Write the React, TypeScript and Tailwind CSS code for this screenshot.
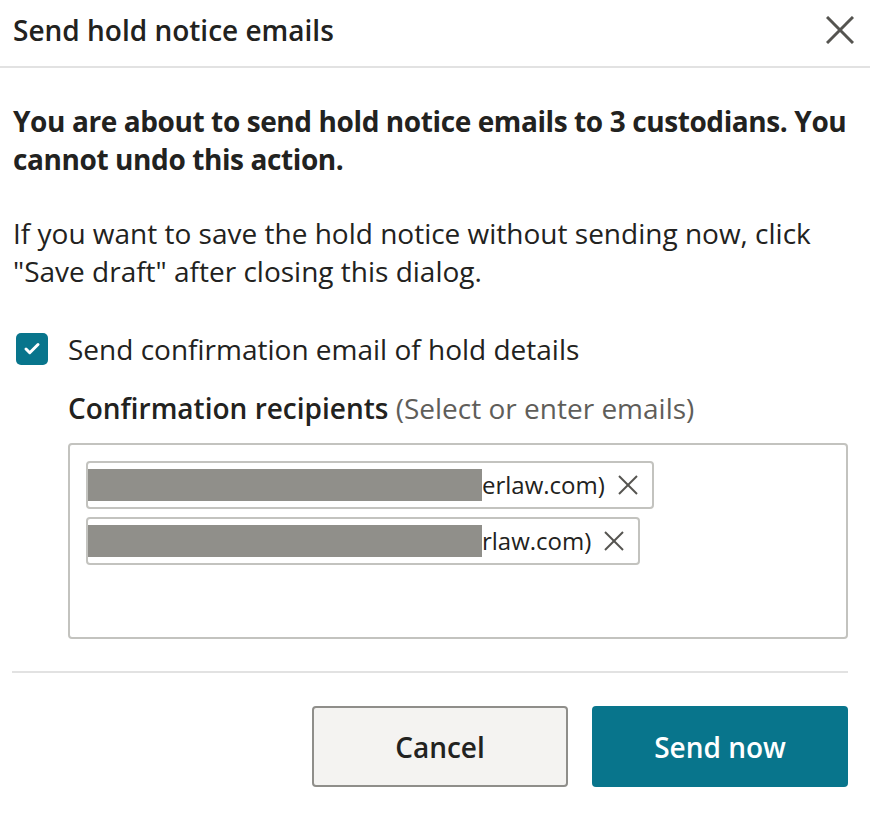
import { Check } from 'lucide-react';

const recipients = [
  { hidden: 394, tail: 'erlaw.com)' },
  { hidden: 394, tail: 'rlaw.com)' },
];

function Cross({ size, stroke, className }: { size: number; stroke: number; className?: string }) {
  return (
    <svg width={size} height={size} viewBox={`0 0 ${size} ${size}`} className={className} fill="none" stroke="currentColor" strokeWidth={stroke}>
      <line x1="1" y1="1" x2={size - 1} y2={size - 1} />
      <line x1={size - 1} y1="1" x2="1" y2={size - 1} />
    </svg>
  );
}

export default function App() {
  return (
    <div className="w-[870px] h-[816px] bg-white text-[#222220] font-['Open_Sans',sans-serif] overflow-hidden">
      <div className="h-[68px] flex items-center justify-between pl-[13px] pr-[16px] border-b-2 border-[#e2e2e2]">
        <h2 className="text-[28px] font-semibold leading-none -mt-[6px]">Send hold notice emails</h2>
        <button className="text-[#555450] -mt-[6px]">
          <Cross size={28} stroke={3} />
        </button>
      </div>

      <div className="pl-[13px] pr-[16px] pt-[34px]">
        <p className="text-[28px] font-bold leading-[38px] tracking-[-0.4px] pr-[4px]">
          You are about to send hold notice emails to 3 custodians. You cannot undo this action.
        </p>
        <p className="text-[28px] leading-[38px] mt-[36px]">
          If you want to save the hold notice without sending now, click "Save draft" after closing this dialog.
        </p>

        <label className="flex items-center gap-[20px] mt-[43px] pl-[3px]">
          <span className="w-[32px] h-[32px] rounded-[5px] bg-[#08758c] flex items-center justify-center text-white">
            <Check size={18} strokeWidth={4} />
          </span>
          <span className="text-[28px] leading-[32px]">Send confirmation email of hold details</span>
        </label>

        <div className="pl-[55px] mt-[26px]">
          <div className="text-[28px] leading-[34px]">
            <span className="font-semibold">Confirmation recipients</span>{' '}
            <span className="text-[#5f5e5a]">(Select or enter emails)</span>
          </div>
          <div className="mt-[18px] h-[196px] w-[780px] border-2 border-[#c3c3bf] rounded-[4px] px-[16px] pt-[16px] flex flex-col items-start gap-[8px]">
            {recipients.map((r, i) => (
              <div key={i} className="h-[48px] border-2 border-[#c3c3bf] rounded-[4px] flex items-center pr-[14px]">
                <span className="h-[32px] bg-[#908f8a]" style={{ width: r.hidden }} />
                <span className="text-[24px] leading-none">{r.tail}</span>
                <Cross size={20} stroke={2} className="ml-[13px] text-[#555450]" />
              </div>
            ))}
          </div>
        </div>

        <div className="mt-[32px] h-[2px] w-[836px] -ml-[1px] bg-[#e2e2e2]" />

        <div className="flex justify-end gap-[24px] mt-[33px] pr-[6px]">
          <button className="w-[256px] h-[81px] rounded-[4px] border-2 border-[#8f8e8a] bg-[#f4f3f1] text-[28px] font-semibold">
            Cancel
          </button>
          <button className="w-[256px] h-[81px] rounded-[4px] bg-[#08758c] text-white text-[28px] font-semibold">
            Send now
          </button>
        </div>
      </div>
    </div>
  );
}
